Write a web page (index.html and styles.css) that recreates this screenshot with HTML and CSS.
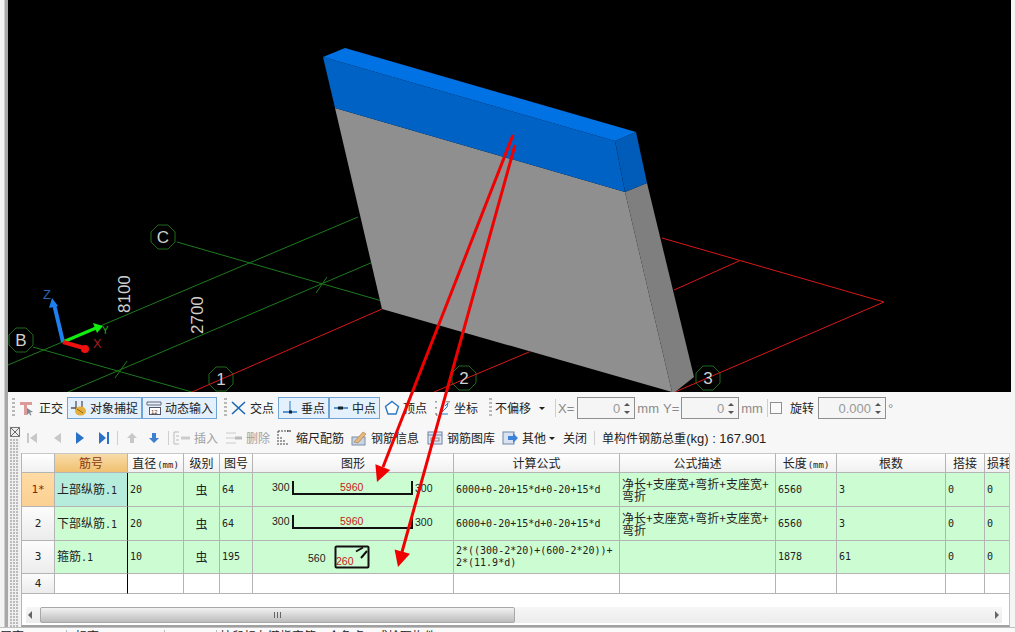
FILE: index.html
```html
<!DOCTYPE html>
<html lang="zh">
<head>
<meta charset="utf-8">
<title>钢筋三维</title>
<link rel="stylesheet" href="styles.css">
</head>
<body>
<div class="app">
  <svg class="stage" width="1003" height="392" viewBox="8 0 1003 392">
    <defs><polygon id="oct" points="-5,-12 5,-12 12,-5 12,5 5,12 -5,12 -12,5 -12,-5"/></defs>
    <rect x="8" y="0" width="1003" height="392" fill="#000"/>
    <g class="gl">
      <line x1="177" y1="242" x2="382" y2="301"/>
      <line x1="33" y1="347" x2="192" y2="392"/>
      <line x1="8" y1="365" x2="358" y2="217"/>
      <line x1="68" y1="392" x2="373" y2="262"/>
      <line x1="115" y1="378" x2="127" y2="361"/>
      <line x1="316" y1="293" x2="327" y2="277"/>
      <use href="#oct" x="163" y="237" class="oct"/>
      <use href="#oct" x="21" y="340" class="oct"/>
      <use href="#oct" x="221" y="379" class="oct"/>
      <use href="#oct" x="464" y="378" class="oct"/>
      <use href="#oct" x="708" y="378" class="oct"/>
    </g>
    <g class="rl">
      <line x1="192" y1="392" x2="382" y2="309"/>
      <line x1="434" y1="392" x2="529" y2="352"/>
      <line x1="662" y1="238" x2="884" y2="302"/>
      <line x1="884" y1="302" x2="675" y2="392"/>
      <line x1="739" y1="261" x2="674" y2="290"/>
    </g>
    <polygon points="335,108 625,192 672,392 382,309" fill="#8f8f8f"/>
    <polygon points="625,192 647,183 694,377 675,392 672,392" fill="#7f7f7f"/>
    <polygon points="323,57 615,141 625,192 335,108" fill="#0062c4"/>
    <polygon points="615,141 636,132 647,183 625,192" fill="#005cb8"/>
    <polygon points="323,57 345,48 636,132 615,141" fill="#0072e4"/>
    <g class="lbl">
      <text x="163" y="243" text-anchor="middle">C</text>
      <text x="21" y="346" text-anchor="middle">B</text>
      <text x="221" y="385" text-anchor="middle">1</text>
      <text x="464" y="384" text-anchor="middle">2</text>
      <text x="708" y="384" text-anchor="middle">3</text>
      <text transform="translate(130 313) rotate(-90)">8100</text>
      <text transform="translate(203 334) rotate(-90)">2700</text>
    </g>
    <line x1="63" y1="342" x2="54" y2="304" stroke="#1e7ff0" stroke-width="4"/>
    <polygon points="52,298 49,308 58,306" fill="#1e7ff0"/>
    <line x1="63" y1="342" x2="96" y2="328" stroke="#10ee10" stroke-width="3"/>
    <polygon points="103,326 93,323 97,333" fill="#10ee10"/>
    <line x1="63" y1="342" x2="84" y2="348" stroke="#f01010" stroke-width="4"/>
    <circle cx="85" cy="349" r="4" fill="#f01010"/>
    <text x="43" y="299" class="ax az">Z</text>
    <text x="102" y="334" class="ax ay">Y</text>
    <text x="93" y="348" class="ax ar">X</text>
  </svg>

  <div class="snapbar">
    <span class="grip"></span>
    <span class="tool">
      <svg class="icon" viewBox="0 0 16 16"><path d="M1 2h12v3H8v10H5V5H1z" fill="#dc9a98"/><path d="M8 8l6 4-3 .5 1.5 2.5-1.2.6L10 13l-2 2z" fill="#7d8a96"/></svg>
      正交
    </span>
    <span class="pair">
      <span class="tool on wide">
        <svg class="icon" viewBox="0 0 16 16"><path d="M0 8h5M5 1v9M11 1v6" stroke="#555" stroke-width="1.3" fill="none"/><ellipse cx="9.5" cy="11" rx="5.5" ry="4.5" fill="#e6ae3c"/><path d="M6 9l6 4" stroke="#8d6414"/></svg>
        对象捕捉
      </span>
      <span class="tool on wide">
        <svg class="icon" viewBox="0 0 16 16"><path d="M1 2h14M1 2v3M15 2v3M1 5h14" stroke="#667" fill="none"/><rect x="3.500" y="7.500" width="11" height="7" fill="#fff" stroke="#556"/><text x="5" y="13.500" class="tiny">12</text></svg>
        动态输入
      </span>
    </span>
    <span class="grip gs"></span>
    <span class="tool tight">
      <svg class="icon" viewBox="0 0 16 16"><path d="M1 2l13 12M14 2L1 14" stroke="#1b67b8" stroke-width="1.600"/></svg>
      交点
    </span>
    <span class="pair">
      <span class="tool on mid">
        <svg class="icon" viewBox="0 0 16 16"><path d="M1 12h14" stroke="#2a78c4" stroke-width="1.500"/><path d="M8 1v11" stroke="#2a78c4"/><rect x="7" y="10.500" width="3" height="3" fill="#123"/></svg>
        垂点
      </span>
      <span class="tool on mid">
        <svg class="icon" viewBox="0 0 16 16"><path d="M1 8h14" stroke="#2a78c4" stroke-width="1.500"/><rect x="5" y="6.500" width="5" height="3" fill="#123"/></svg>
        中点
      </span>
    </span>
    <span class="tool tight">
      <svg class="icon" viewBox="0 0 16 16"><path d="M8 1.500l6.500 5-2.500 7.500H4L1.500 6.500z" fill="#fff" stroke="#2a78c4" stroke-width="1.400"/></svg>
      顶点
    </span>
    <span class="tool t-coord">
      <svg class="icon" viewBox="0 0 16 16"><path d="M2 1v3M2 7v3M2 13v2M13 1v2M15 1v2M2 15h3" stroke="#444" stroke-dasharray="1.500 1.500"/><path d="M6 14L13 7l1-4-3 3M6 14h8" stroke="#2a78c4" fill="none"/></svg>
      坐标
    </span>
    <span class="grip gd"></span>
    <span class="drop">不偏移<i class="caret"></i></span>
    <span class="vsep"></span>
    <span class="lab lx">X=</span>
    <span class="spin s58">0<i class="arrows"><b class="up"></b><b class="dn"></b></i></span>
    <span class="lab">mm</span>
    <span class="lab ly">Y=</span>
    <span class="spin s58">0<i class="arrows"><b class="up"></b><b class="dn"></b></i></span>
    <span class="lab">mm</span>
    <span class="vsep"></span>
    <span class="check"></span>
    <span class="rot">旋转</span>
    <span class="spin s68">0.000<i class="arrows"><b class="up"></b><b class="dn"></b></i></span>
    <span class="lab">°</span>
  </div>

  <div class="lower">
    <div class="side">
      <svg class="closer" width="10" height="10" viewBox="0 0 10 10"><rect x=".5" y=".5" width="9" height="9" fill="#eee" stroke="#777"/><path d="M1 1l8 8M9 1L1 9" stroke="#666"/></svg>
      <span class="dots"></span>
    </div>
    <div class="main">
      <div class="cmdbar">
        <svg class="nav n1" viewBox="0 0 10 12"><path d="M0 1h2v10H0zM10 1v10L3 6z" fill="#c8c8c8"/></svg>
        <svg class="nav n2" viewBox="0 0 8 12"><path d="M8 1v10L1 6z" fill="#c8c8c8"/></svg>
        <svg class="nav n3" viewBox="0 0 10 12"><path d="M1 0v12l8-6z" fill="#2a72c8"/></svg>
        <svg class="nav n4" viewBox="0 0 10 12"><path d="M0 0v12l7-6zM8 0h2v12H8z" fill="#2a72c8"/></svg>
        <span class="vsep c1"></span>
        <svg class="nav n5" viewBox="0 0 10 10"><path d="M5 0l5 5H7v5H3V5H0z" fill="#c8c8c8"/></svg>
        <svg class="nav n6" viewBox="0 0 10 10"><path d="M5 10L0 5h3V0h4v5h3z" fill="#3f7fd0"/></svg>
        <span class="vsep c2"></span>
        <span class="cmd off c-ins">
          <svg class="icon w18" viewBox="0 0 18 16"><path d="M1 2h5M1 2v12M1 14h5M3 6h3M3 10h3" stroke="#bbb" fill="none"/><path d="M8 8h9" stroke="#ccc" stroke-width="3"/></svg>
          插入
        </span>
        <span class="cmd off c-del">
          <svg class="icon w18" viewBox="0 0 18 16"><path d="M1 3h10M1 8h10M1 13h10" stroke="#ccc"/><path d="M10 8h7" stroke="#bbb" stroke-width="3"/></svg>
          删除
        </span>
        <span class="cmd c-scale">
          <svg class="icon" viewBox="0 0 16 16"><path d="M2 1v14M2 1h10M5 15V6M8 15V9M11 15v-3" stroke="#444" fill="none" stroke-dasharray="2 1"/><path d="M11 1h4" stroke="#222"/></svg>
          缩尺配筋
        </span>
        <span class="cmd c-info">
          <svg class="icon" viewBox="0 0 16 16"><rect x="1" y="7" width="13" height="8" fill="#c8d4e6" stroke="#7c8ea8"/><path d="M3 12L12 2l3 2-8 9z" fill="#e8b878" stroke="#8a6a3a" stroke-width=".5"/></svg>
          钢筋信息
        </span>
        <span class="cmd c-lib">
          <svg class="icon" viewBox="0 0 16 16"><rect x="1" y="2" width="14" height="12" fill="#dfe6f2" stroke="#6f82a6"/><path d="M1 5h14" stroke="#6f82a6"/><rect x="4" y="8" width="8" height="3" fill="none" stroke="#8a8a8a"/></svg>
          钢筋图库
        </span>
        <span class="cmd c-oth">
          <svg class="icon" viewBox="0 0 16 16"><rect x="1" y="2" width="11" height="12" fill="#d8e2f0" stroke="#7088a8"/><path d="M6 6h5V3l5 5-5 5v-3H6z" fill="#3c82d8"/></svg>
          其他<i class="caret dk"></i>
        </span>
        <span class="cmd c-close">关闭</span>
        <span class="vsep c3"></span>
        <span class="total">单构件钢筋总重<span class="la">(kg) : 167.901</span></span>
      </div>

      <div class="gridframe">
        <table class="grid">
          <colgroup>
            <col class="w33"><col class="w73"><col class="w56"><col class="w36"><col class="w33"><col class="w201"><col class="w166"><col class="w156"><col class="w61"><col class="w109"><col class="w39"><col class="w26">
          </colgroup>
          <thead>
            <tr class="h20">
              <th></th><th class="sel">筋号</th><th>直径<small>(mm)</small></th><th>级别</th><th>图号</th><th>图形</th><th>计算公式</th><th>公式描述</th><th>长度<small>(mm)</small></th><th>根数</th><th>搭接</th><th>损耗</th>
            </tr>
          </thead>
          <tbody>
            <tr class="h34 data">
              <th class="cur">1*</th><td class="nm act">上部纵筋<span class="m">.1</span></td><td class="m">20</td><td class="ctr">虫</td><td class="m">64</td>
              <td class="fig">
                <svg class="shape" width="200" height="33" viewBox="253 474 200 33"><path d="M293 482v13h119v-13" class="bar"/><text x="272" y="492">300</text><text x="415" y="493">300</text><text x="340" y="492" class="red">5960</text></svg>
              </td>
              <td class="m">6000+0-20+15*d+0-20+15*d</td><td class="ds">净长+支座宽+弯折+支座宽+<br>弯折</td><td class="m">6560</td><td class="m">3</td><td class="m">0</td><td class="m">0</td>
            </tr>
            <tr class="h34 data">
              <th>2</th><td class="nm">下部纵筋<span class="m">.1</span></td><td class="m">20</td><td class="ctr">虫</td><td class="m">64</td>
              <td class="fig">
                <svg class="shape" width="200" height="33" viewBox="253 474 200 33"><path d="M293 482v13h119v-13" class="bar"/><text x="272" y="492">300</text><text x="415" y="493">300</text><text x="340" y="492" class="red">5960</text></svg>
              </td>
              <td class="m">6000+0-20+15*d+0-20+15*d</td><td class="ds">净长+支座宽+弯折+支座宽+<br>弯折</td><td class="m">6560</td><td class="m">3</td><td class="m">0</td><td class="m">0</td>
            </tr>
            <tr class="h33 data">
              <th>3</th><td class="nm">箍筋<span class="m">.1</span></td><td class="m">10</td><td class="ctr">虫</td><td class="m">195</td>
              <td class="fig">
                <svg class="shape" width="200" height="32" viewBox="253 542 200 32"><rect x="335.500" y="547.500" width="33" height="21" rx="1" class="bar"/><path d="M356 552.500l7-4M361 559l6-7" class="bar"/><text x="308" y="563">560</text><text x="336" y="566" class="red">260</text></svg>
              </td>
              <td class="m">2*((300-2*20)+(600-2*20))+<br>2*(11.9*d)</td><td></td><td class="m">1878</td><td class="m">61</td><td class="m">0</td><td class="m">0</td>
            </tr>
            <tr class="h20">
              <th>4</th><td class="nm"></td><td></td><td></td><td></td><td></td><td></td><td></td><td></td><td></td><td></td><td></td>
            </tr>
          </tbody>
        </table>
        <div class="hscroll">
          <i class="sa sl"></i>
          <span class="thumb"><b class="thgrip"></b></span>
          <i class="sa sr"></i>
        </div>
      </div>
    </div>
  </div>

  <div class="status">
    <span class="st s1">层高</span>
    <span class="st s2">标高</span>
    <span class="st s3"></span>
    <span class="st s4">按鼠标左键指定第一个角点，或拾取构件</span>
  </div>

  <svg class="arrows-over" width="1015" height="632" viewBox="0 0 1015 632">
    <line x1="513" y1="135" x2="383" y2="467" class="ar-line"/>
    <polygon points="377,482 375.400,464.200 390.200,470" class="ar-head"/>
    <line x1="515" y1="145" x2="402" y2="552" class="ar-line"/>
    <polygon points="398,567 394.600,549.500 410,553.700" class="ar-head"/>
  </svg>
</div>
</body>
</html>
```
FILE: styles.css
```css
* { box-sizing: border-box; }
html, body { margin: 0; padding: 0; }
body { background: #fff; }
.app {
  position: relative;
  width: 1015px;
  height: 632px;
  overflow: hidden;
  background: linear-gradient(90deg, #f4f4f4 0, #f4f4f4 4px, #a8a8a8 5px, #a8a8a8 8px, #f5f5f5 8px);
  font: 12px/1 "Noto Sans CJK SC", "Liberation Sans", sans-serif;
  color: #222;
}
.stage { display: block; margin-left: 8px; }
.gl line { stroke: #1d7a1d; stroke-width: 1; }
.oct { fill: none; stroke: #1d6a1d; stroke-width: 1; }
.rl line { stroke: #d81818; stroke-width: 1; }
.lbl text { font: 17px "Liberation Sans", sans-serif; fill: #d0d0d0; }
.ax { font: 13px "Liberation Sans", sans-serif; }
.az { fill: #2a66b8; }
.ay { fill: #20b020; font-size: 10px; }
.ar { fill: #a02020; }

.snapbar {
  display: flex;
  align-items: center;
  gap: 4px;
  height: 34px;
  margin-left: 8px;
  padding: 0 0 2px 4px;
  background: #f7f7f7;
}
.grip {
  width: 3px;
  height: 20px;
  background: repeating-linear-gradient(180deg, #b8b8b8 0 2px, transparent 2px 4px);
  flex: none;
}
.gs { margin: 0 0 0 3px; }
.gd { margin: 0 -1px 0 7px; }
.tool { display: flex; align-items: center; gap: 4px; flex: none; height: 22px; }
.tight { gap: 3px; }
.t-coord { margin-left: 3px; }
.pair { display: flex; flex: none; }
.on {
  border: 1px solid #6ea4d6;
  background: #e4f0fb;
  padding-left: 3px;
  margin-left: 0;
}
.wide { width: 75px; gap: 3px; }
.mid { width: 51px; gap: 3px; }
.icon { width: 16px; height: 16px; flex: none; display: block; }
.w18 { width: 18px; }
.tiny { font: 6px "Liberation Sans", sans-serif; fill: #333; }
.drop { display: flex; align-items: center; width: 56px; flex: none; }
.caret {
  display: block;
  width: 0;
  height: 0;
  margin-left: 8px;
  border: 3px solid transparent;
  border-top: 3px solid #222;
  border-bottom: 0;
}
.caret.dk { margin-left: -1px; }
.vsep { width: 1px; height: 18px; background: #cfcfcf; flex: none; }
.lab { font: 13px "Liberation Sans", sans-serif; color: #8a8a8a; flex: none; margin-left: -2px; }
.lx { margin-right: -1px; }
.ly { margin-left: 0; margin-right: -2px; }
.spin {
  display: flex;
  align-items: center;
  justify-content: flex-end;
  gap: 4px;
  height: 22px;
  flex: none;
  border: 1px solid #8f8f8f;
  background: #f5f5f5;
  padding-right: 3px;
  font: 13px "Liberation Sans", sans-serif;
  color: #999;
}
.s58 { width: 58px; }
.s68 { width: 68px; }
.arrows { display: flex; flex-direction: column; gap: 5px; width: 7px; }
.arrows b { display: block; width: 0; height: 0; border: 3px solid transparent; border-bottom-width: 0; }
.arrows .up { border-top-width: 0; border-bottom: 3px solid #555; }
.arrows .dn { border-top: 3px solid #555; }
.check { width: 12px; height: 12px; border: 1px solid #8f8f8f; background: #fafafa; flex: none; margin-left: -2px; }
.rot { margin-left: 4px; flex: none; }

.lower { display: flex; height: 201px; margin-left: 8px; }
.side { width: 12px; flex: none; padding: 1px 0 0 2px; display: flex; flex-direction: column; gap: 2px; background: #f0f0f0; }
.closer { display: block; }
.dots {
  flex: 1;
  width: 8px;
  background: radial-gradient(circle at 1px 1px, #bbb 1px, transparent 1.200px) 0 0 / 3px 3px;
}
.main { width: 995px; flex: none; }
.cmdbar {
  display: flex;
  align-items: center;
  height: 27px;
  padding-bottom: 3px;
  margin-left: 1px;
  background: #f7f7f7;
  white-space: nowrap;
}
.nav { display: block; flex: none; height: 12px; }
.n1 { width: 10px; margin-left: 6px; }
.n2 { width: 8px; margin-left: 16px; }
.n3 { width: 10px; margin-left: 14px; }
.n4 { width: 10px; margin-left: 14px; }
.n5 { width: 10px; height: 10px; margin-left: 9px; }
.n6 { width: 10px; height: 10px; margin-left: 12px; }
.c1 { margin-left: 8px; height: 14px; }
.c2 { margin-left: 9px; height: 14px; }
.c3 { margin-left: 7px; height: 14px; }
.cmd { display: flex; align-items: center; gap: 4px; flex: none; }
.off { color: #a0a0a0; gap: 3px; }
.c-ins { margin-left: 4px; }
.c-del { margin-left: 7px; }
.c-scale { margin-left: 6px; }
.c-info { margin-left: 7px; }
.c-lib { margin-left: 8px; }
.c-oth { margin-left: 7px; }
.c-close { margin-left: 8px; }
.total { margin-left: 7px; }
.la { font-family: "Liberation Sans", sans-serif; font-size: 13px; }

.gridframe {
  position: relative;
  height: 174px;
  width: 989px;
  margin-left: 1px;
  background: #fff;
  overflow: hidden;
  border-left: 1px solid #b4b4b4;
  border-bottom: 2px solid #a0a0a0;
  border-right: 1px solid #c0c0c0;
}
.grid {
  table-layout: fixed;
  width: 989px;
  border-collapse: separate;
  border-spacing: 0;
}
.w33 { width: 33px; } .w73 { width: 73px; } .w56 { width: 56px; } .w36 { width: 36px; }
.w201 { width: 201px; } .w166 { width: 166px; } .w156 { width: 156px; } .w61 { width: 61px; }
.w109 { width: 109px; } .w39 { width: 39px; } .w26 { width: 26px; }
.h20 { height: 20px; }
.h34 { height: 34px; }
.h33 { height: 33px; }
.grid th, .grid td {
  padding: 0 2px;
  border-right: 1px solid #b4b4b4;
  border-bottom: 1px solid #b4b4b4;
  overflow: hidden;
  font-weight: 400;
  vertical-align: middle;
  line-height: 12px;
}
thead th {
  text-align: center;
  white-space: nowrap;
  background: linear-gradient(#ffffff, #f0f0f0);
  border-top: 1px solid #c8c8c8;
}
thead th.sel { background: linear-gradient(#f8dca8, #f0c070); color: #8a3a10; }
small { font: 9px "DejaVu Sans Mono", monospace; margin-left: 1px; }
tbody th {
  text-align: center;
  font: 11px "DejaVu Sans Mono", monospace;
  background: linear-gradient(#fcfcfc, #ececec);
}
tbody th.cur { background: linear-gradient(#ffdca4, #fbd092); color: #7a2a10; }
.data td { background: #ccfdd2; }
.grid td.act { background: #b6ecdc; }
.grid td.nm { border-right: 1px solid #000; }
.m { font: 10px/12px "DejaVu Sans Mono", monospace; }
.grid td.ctr { text-align: center; }
.ds { font-size: 12px; white-space: nowrap; }
.grid td.fig { padding: 0; position: relative; }
.shape { display: block; }
.shape text { font: 10.5px "Liberation Sans", sans-serif; fill: #222; }
.shape text.red { fill: #c81818; }
.bar { fill: none; stroke: #111; stroke-width: 2; }

.hscroll {
  position: absolute;
  left: 4px;
  right: 7px;
  top: 154px;
  height: 16px;
  display: flex;
  align-items: center;
  background: linear-gradient(#f6f6f6, #ececec);
}
.sa { display: block; width: 0; height: 0; flex: none; border: 4px solid transparent; }
.sl { border-left-width: 0; border-right: 4px solid #666; margin: 0 8px 0 2px; }
.sr { border-right-width: 0; border-left: 4px solid #666; margin-left: auto; margin-right: 3px; }
.thumb {
  display: flex;
  align-items: center;
  justify-content: center;
  width: 475px;
  height: 16px;
  border: 1px solid #a8a8a8;
  border-radius: 2px;
  background: linear-gradient(#f2f2f2, #bcbcbc);
}
.thgrip { display: block; width: 7px; height: 6px; background: repeating-linear-gradient(90deg, #666 0 1px, transparent 1px 3px); }

.status {
  display: flex;
  height: 5px;
  overflow: hidden;
  border-top: 1px solid #c0c0c0;
  background: #fafafa;
  line-height: 12px;
  padding-top: 2px;
}
.st { flex: none; padding-left: 3px; border-right: 1px solid #bbb; white-space: nowrap; overflow: hidden; height: 12px; }
.s1 { width: 67px; padding-left: 0; }
.s2 { width: 98px; padding-left: 8px; }
.s3 { width: 52px; }
.s4 { border: 0; }

.arrows-over { position: absolute; left: 0; top: 0; pointer-events: none; }
.ar-line { stroke: #f00000; stroke-width: 3; }
.ar-head { fill: #f00000; }
```
